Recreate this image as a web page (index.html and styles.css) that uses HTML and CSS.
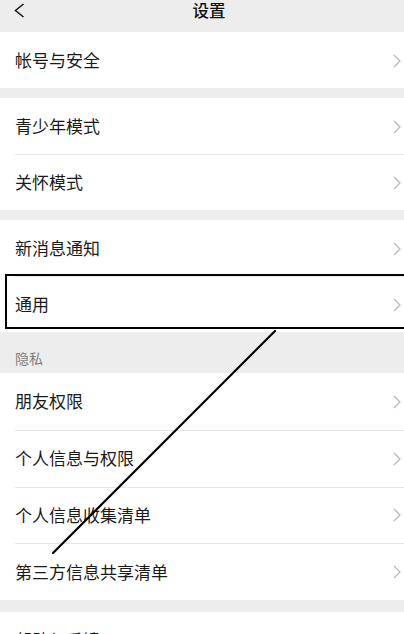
FILE: index.html
```html
<!DOCTYPE html>
<html lang="zh-CN">
<head>
<meta charset="utf-8">
<title>设置</title>
<link rel="stylesheet" href="styles.css">
</head>
<body>
<div class="page">
  <header class="header">
    <svg class="back" width="11" height="15" viewBox="0 0 11 15"><polyline points="9.5,1 1.5,7.5 9.5,14" fill="none" stroke="#1a1a1a" stroke-width="1.6" stroke-linejoin="miter"/></svg>
    <div class="title">设置</div>
  </header>

  <section class="group g1">
    <div class="row"><span>帐号与安全</span><svg class="chev" width="8" height="14" viewBox="0 0 8 14"><polyline points="1,1 7,7 1,13" fill="none" stroke="#b5b5b5" stroke-width="1.2"/></svg></div>
  </section>

  <section class="group g2">
    <div class="row"><span>青少年模式</span><svg class="chev" width="8" height="14" viewBox="0 0 8 14"><polyline points="1,1 7,7 1,13" fill="none" stroke="#b5b5b5" stroke-width="1.2"/></svg></div>
    <div class="row"><span>关怀模式</span><svg class="chev" width="8" height="14" viewBox="0 0 8 14"><polyline points="1,1 7,7 1,13" fill="none" stroke="#b5b5b5" stroke-width="1.2"/></svg></div>
  </section>

  <section class="group g3">
    <div class="row"><span>新消息通知</span><svg class="chev" width="8" height="14" viewBox="0 0 8 14"><polyline points="1,1 7,7 1,13" fill="none" stroke="#b5b5b5" stroke-width="1.2"/></svg></div>
    <div class="row marked"><span>通用</span><svg class="chev" width="8" height="14" viewBox="0 0 8 14"><polyline points="1,1 7,7 1,13" fill="none" stroke="#b5b5b5" stroke-width="1.2"/></svg><div class="mark-box"></div></div>
  </section>

  <div class="label">隐私</div>

  <section class="group g4">
    <div class="row"><span>朋友权限</span><svg class="chev" width="8" height="14" viewBox="0 0 8 14"><polyline points="1,1 7,7 1,13" fill="none" stroke="#b5b5b5" stroke-width="1.2"/></svg></div>
    <div class="row"><span>个人信息与权限</span><svg class="chev" width="8" height="14" viewBox="0 0 8 14"><polyline points="1,1 7,7 1,13" fill="none" stroke="#b5b5b5" stroke-width="1.2"/></svg></div>
    <div class="row"><span>个人信息收集清单</span><svg class="chev" width="8" height="14" viewBox="0 0 8 14"><polyline points="1,1 7,7 1,13" fill="none" stroke="#b5b5b5" stroke-width="1.2"/></svg></div>
    <div class="row"><span>第三方信息共享清单</span><svg class="chev" width="8" height="14" viewBox="0 0 8 14"><polyline points="1,1 7,7 1,13" fill="none" stroke="#b5b5b5" stroke-width="1.2"/></svg></div>
  </section>

  <section class="group g5">
    <div class="row"><span>帮助与反馈</span><svg class="chev" width="8" height="14" viewBox="0 0 8 14"><polyline points="1,1 7,7 1,13" fill="none" stroke="#b5b5b5" stroke-width="1.2"/></svg></div>
  </section>

  <svg class="annot-line" width="404" height="634" viewBox="0 0 404 634"><line x1="275" y1="331" x2="53" y2="553" stroke="#000" stroke-width="2.2" stroke-linecap="round"/></svg>
</div>
</body>
</html>
```

FILE: styles.css
```css
html, body {
  margin: 0;
  padding: 0;
}
body {
  background: #ededed;
  font-family: "Noto Sans CJK SC", "Noto Sans", sans-serif;
  color: #1a1a1a;
}
.page {
  position: relative;
  width: 404px;
  height: 634px;
  overflow: hidden;
  background: #ededed;
}
.header {
  position: relative;
  height: 32px;
  display: flex;
  justify-content: center;
  align-items: flex-start;
  padding-left: 14px;
  padding-top: 1px;
  box-sizing: border-box;
}
.back {
  position: absolute;
  left: 14px;
  top: 3px;
}
.title {
  font-size: 16.5px;
  line-height: 18px;
  font-weight: 500;
  color: #111;
}
.group {
  background: #fff;
}
.g1 { margin-bottom: 10px; }
.g2 { margin-bottom: 10px; }
.g4 { margin-bottom: 12px; }
.row {
  position: relative;
  height: 56px;
  display: flex;
  align-items: center;
  justify-content: space-between;
  padding: 0 3px 0 15px;
  font-size: 17px;
  background: #fff;
}
.row + .row {
  background: linear-gradient(#e7e7e7, #e7e7e7) 15px 0 / calc(100% - 15px) 1px no-repeat, #fff;
}
.g4 .row {
  height: 56.75px;
}
.row span {
  line-height: 20px;
}
.chev {
  display: block;
  margin-top: 1px;
}
.label {
  height: 41px;
  box-sizing: border-box;
  padding: 18px 0 0 15px;
  font-size: 14px;
  line-height: 16px;
  color: #7f7f7f;
}
.mark-box {
  position: absolute;
  left: 5px;
  top: -2px;
  right: -10px;
  bottom: 3px;
  border: 2px solid #000;
  pointer-events: none;
}
.annot-line {
  position: absolute;
  left: 0;
  top: 0;
  pointer-events: none;
}
```
